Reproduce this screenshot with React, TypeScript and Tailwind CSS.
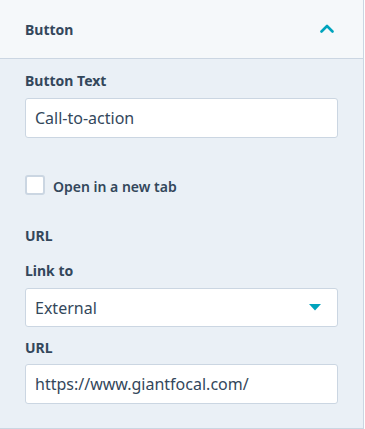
import React from "react";

const font = { fontFamily: '"Noto Sans", "Liberation Sans", sans-serif' };

function Label({ children, className = "" }: { children: React.ReactNode; className?: string }) {
  return <div className={`text-[14px] leading-5 font-bold text-[#33475b] ${className}`}>{children}</div>;
}

function TextInput({ value, className = "" }: { value: string; className?: string }) {
  return (
    <input
      readOnly
      value={value}
      className={`block w-full h-10 px-[9px] bg-white border border-[#cbd6e2] rounded-[3px] text-[16px] text-[#33475b] outline-none ${className}`}
    />
  );
}

export default function App() {
  return (
    <div className="min-h-screen bg-white" style={font}>
      <div className="w-[364px] border-r border-b border-[#cbd6e2]">
        <div className="h-[59px] flex items-center justify-between pl-[25px] pr-[29px] bg-[#f5f8fa] border-b border-[#cbd6e2]">
          <span className="text-[14px] font-bold text-[#33475b]">Button</span>
          <svg width="14" height="9" viewBox="0 0 14 9" fill="none" className="mt-[-1px]">
            <path d="M1.5 7.5 L7 2 L12.5 7.5" stroke="#00a4bd" strokeWidth="2.6" strokeLinecap="round" strokeLinejoin="round" />
          </svg>
        </div>
        <div className="bg-[#eaf0f6] px-[25px] pt-[12px] pb-[24px]">
          <Label>Button Text</Label>
          <TextInput value="Call-to-action" className="mt-[7px]" />

          <div className="mt-[37px] flex items-start gap-[8px]">
            <span className="w-[20px] h-[20px] bg-white border-2 border-[#cbd6e2] rounded-[3px]" />
            <span className="pt-[2px] text-[14px] leading-5 font-semibold text-[#33475b]">Open in a new tab</span>
          </div>

          <Label className="mt-[29px]">URL</Label>
          <Label className="mt-[15px]">Link to</Label>
          <div className="mt-[7px] h-[39px] flex items-center justify-between pl-[9px] pr-[16px] bg-white border border-[#cbd6e2] rounded-[3px]">
            <span className="text-[16px] text-[#33475b]">External</span>
            <svg width="12" height="7" viewBox="0 0 12 7">
              <path d="M0 0 L12 0 L6 6.5 Z" fill="#00a4bd" />
            </svg>
          </div>

          <Label className="mt-[11px]">URL</Label>
          <TextInput value="https://www.giantfocal.com/" className="mt-[6px]" />
        </div>
      </div>
    </div>
  );
}
